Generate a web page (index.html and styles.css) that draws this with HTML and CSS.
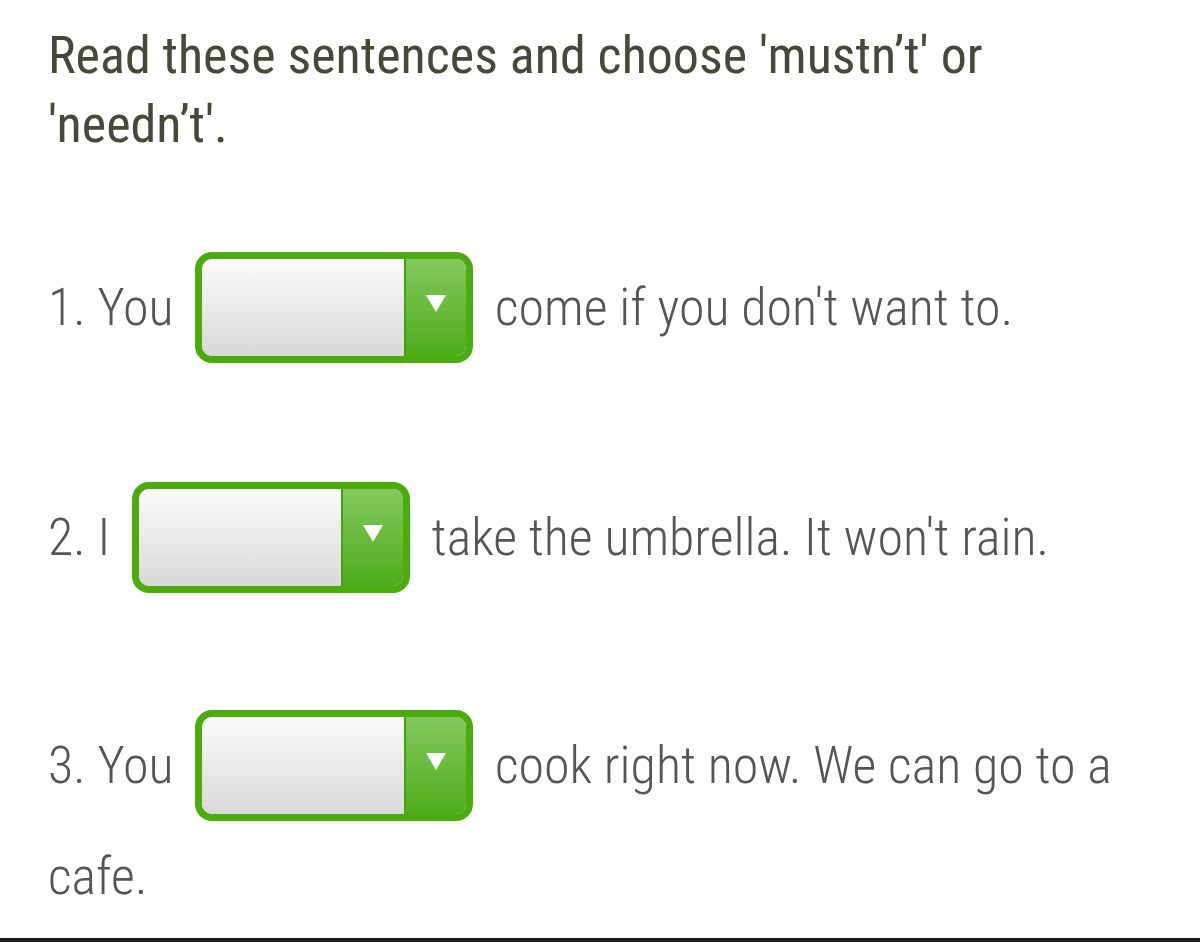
FILE: index.html
```html
<!DOCTYPE html>
<html lang="en">
<head>
<meta charset="utf-8">
<title>mustn't or needn't</title>
<link rel="stylesheet" href="styles.css">
</head>
<body>
<div class="content">
  <h1 class="title">Read these sentences and choose 'mustn’t' or 'needn’t'.</h1>
  <p class="q q1">1. You <span class="sel"><span class="sel-field"></span><span class="sel-btn"><span class="tri"></span></span></span> come if you don't want to.</p>
  <p class="q q2">2. I <span class="sel"><span class="sel-field"></span><span class="sel-btn"><span class="tri"></span></span></span> take the umbrella. It won't rain.</p>
  <p class="q q3">3. You <span class="sel"><span class="sel-field"></span><span class="sel-btn"><span class="tri"></span></span></span> cook right now. We can go to a cafe.</p>
</div>
<div class="bottom-line"></div>
</body>
</html>
```
FILE: styles.css
```css
html, body {
  margin: 0;
  padding: 0;
  background: #ffffff;
}
body {
  font-family: "Roboto Condensed", "Roboto", "Liberation Sans Narrow", sans-serif;
  font-stretch: 75%;
  width: 1200px;
  height: 942px;
  overflow: hidden;
  display: flex;
  flex-direction: column;
}
.content {
  padding: 0 48px;
  flex: 1;
  min-height: 0;
  overflow: hidden;
}
.title {
  margin: 21px 0 0;
  font-size: 52px;
  line-height: 69px;
  font-weight: 400;
  color: #48483a;
}
.q {
  font-size: 52px;
  line-height: 110px;
  font-weight: 300;
  color: #555555;
  margin: 117px 0 0;
}
.q1 { margin-top: 93px; }
.q2 { margin-top: 119px; }
.q3 { line-height: 111px; }
.sel {
  display: inline-flex;
  box-sizing: border-box;
  width: 278px;
  height: 111px;
  border: 7px solid #4cab0f;
  border-radius: 17px;
  vertical-align: -31px;
  overflow: hidden;
  margin: 0 10px;
}
.sel-field {
  flex: 1;
  background: linear-gradient(#fbfbfb, #d8d8d8);
  border-radius: 10px 0 0 10px;
}
.sel-btn {
  width: 62px;
  display: flex;
  justify-content: center;
  padding-top: 36px;
  box-sizing: border-box;
  border-left: 2px solid #46a010;
  background: linear-gradient(#82c95c, #4fac1c);
}
.tri {
  width: 0;
  height: 0;
  border-left: 10px solid transparent;
  border-right: 10px solid transparent;
  border-top: 17px solid #ffffff;
}
.bottom-line {
  flex-shrink: 0;
  height: 4px;
  background: #1e1e1e;
}
```
